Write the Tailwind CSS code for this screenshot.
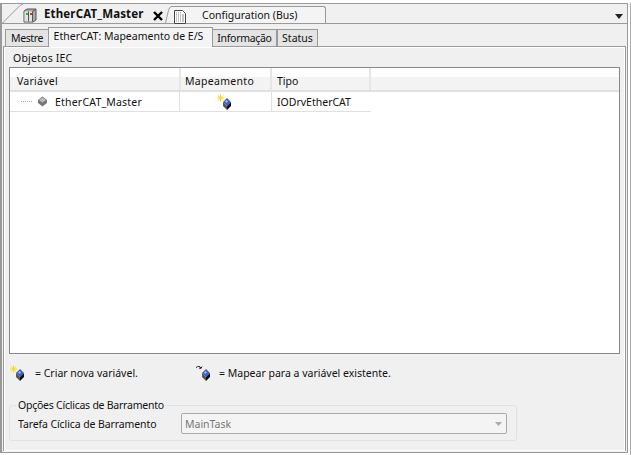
<!DOCTYPE html>
<html lang="en">
<head>
  <meta charset="UTF-8" />
  <title>EtherCAT_Master</title>
  <script src="https://cdn.jsdelivr.net/npm/@tailwindcss/browser@4"></script>
</head>
<body class="w-[631px] h-[455px] overflow-hidden bg-white text-[10.5px] leading-[14px] text-[#111] font-['Noto_Sans','Open_Sans',sans-serif]">
  <div class="w-[631px] h-[455px] pt-[3px] flex">
    <div class="w-[628px] h-[450px] border border-[#999] border-l-2 bg-[#f0f0f0] flex flex-col">

      <!-- editor tabs -->
      <div class="relative h-[20px] border-b border-[#999] flex items-end shrink-0">
        <svg class="absolute left-0 top-0" width="22" height="20" viewBox="0 0 22 20"><path d="M0 19.500L18 1.500q1-1 3-1" stroke="#999" fill="none"/></svg>
        <div class="ml-[21px] w-[142px] h-[19px] flex items-center relative">
          <svg class="mt-[3px]" width="14" height="15" viewBox="0 0 14 15">
            <path d="M1 3l3-2h9v11l-3 2H1z" fill="#aaa" stroke="#555"/>
            <path d="M1.500 3.500h8v10h-8z" fill="#e2e2e2"/>
            <path d="M5.500 3.500v10M9.500 3.500v10M9.500 3.500l3-2" stroke="#555" fill="none"/>
            <rect x="3" y="5" width="2" height="2" fill="#2b2"/>
            <rect x="7" y="5" width="2" height="2" fill="#c33"/>
          </svg>
          <span class="ml-[7px] font-bold text-[11.5px] tracking-[0.15px]">EtherCAT_Master</span>
          <svg class="absolute left-[130px] top-[7px]" width="10" height="10" viewBox="0 0 10 10"><path d="M1 1l8 8M9 1L1 9" stroke="#000" stroke-width="2.400"/></svg>
        </div>
        <svg class="-mr-[1px] shrink-0 relative z-10" width="7" height="17" viewBox="0 0 7 17"><path d="M.5 17C2 11 3 5 4.500 2q.7-1.500 2.500-1.500" stroke="#999" fill="#f4f4f4"/></svg>
        <div class="w-[155px] h-[17px] bg-[#f4f4f4] border-t border-r border-[#999] rounded-tr-[3px] flex items-center">
          <svg class="ml-[2px] mt-[2px]" width="14" height="15" viewBox="0 0 14 15">
            <path d="M1.500 1.500h8l3 3v10h-11z" fill="#fff" stroke="#444"/>
            <path d="M3 4h6M3 6h8M3 8h8M3 10h8M3 12h8" stroke="#888"/>
            <path d="M4.500 3v10M6.500 3v10M8.500 3v10" stroke="#fff"/>
          </svg>
          <span class="ml-[15px]">Configuration (Bus)</span>
        </div>
        <svg class="absolute right-[4px] top-[10px]" width="8" height="5" viewBox="0 0 8 5"><path d="M0 0h8L4 5z" fill="#222"/></svg>
      </div>

      <!-- device tabs -->
      <div class="h-[19px] mt-[3px] pl-[3px] flex items-end shrink-0 relative z-10">
        <div class="w-[44px] h-[17px] border border-b-0 border-[#999] bg-[#e4e4e4] flex items-center justify-center tracking-[-0.4px]">Mestre</div>
        <div class="w-[165px] h-[20px] border border-b-0 border-[#999] bg-[#f4f4f4] flex items-center justify-center -ml-[1px] -mb-[1px] pb-[3px] pr-[4px]">EtherCAT: Mapeamento de E/S</div>
        <div class="w-[65px] h-[17px] border border-b-0 border-[#999] bg-[#e4e4e4] flex items-center justify-center -ml-[1px] tracking-[-0.3px]">Informação</div>
        <div class="w-[41px] h-[17px] border border-b-0 border-[#999] bg-[#e4e4e4] flex items-center justify-center">Status</div>
      </div>

      <!-- page -->
      <div class="ml-[1px] mr-[1px] h-[405px] border border-[#999] border-b-0 shadow-[inset_1px_1px_0_#fff,inset_-1px_-1px_0_#fff] flex flex-col pl-[5px]">
        <div class="h-[20px] pt-[4px] pl-[4px] shrink-0 tracking-[0.2px]">Objetos IEC</div>

        <div class="w-[611px] h-[287px] border border-[#888] bg-white shrink-0 flex flex-col">
          <div class="h-[24px] flex border-b-2 border-[#e0e0e0] bg-[linear-gradient(#fff_0,#fff_40%,#f3f3f3_40%,#f3f3f3)] shrink-0">
            <div class="w-[171px] pl-[7px] pt-[6px] border-r-2 border-[#e6e6e6] tracking-[0.25px]">Variável</div>
            <div class="w-[91px] pl-[4px] pt-[6px] border-r-2 border-[#e6e6e6] tracking-[0.3px]">Mapeamento</div>
            <div class="w-[99px] pl-[5px] pt-[6px] border-r-2 border-[#e6e6e6]">Tipo</div>
          </div>
          <div class="h-[20px] w-[361px] flex border-b border-[#e0e0e0]">
            <div class="w-[170px] flex items-center border-r border-[#e0e0e0]">
              <span class="ml-[11px] w-[11px] border-t border-dotted border-[#aaa]"></span>
              <svg class="ml-[5px]" width="11" height="11" viewBox="0 0 11 11">
                <path d="M5.500 .5l4.500 3.500v3l-4.500 3.500-4.500-3.500v-3z" fill="#777"/>
                <path d="M5.500 1.500L9 4 5.500 6.500 2 4z" fill="#bbb"/>
              </svg>
              <span class="ml-[7px] tracking-[0.2px]">EtherCAT_Master</span>
            </div>
            <div class="w-[92px] flex items-center border-r border-[#e0e0e0]">
              <svg class="ml-[36px]" width="16" height="16" viewBox="0 0 16 16">
                <path d="M4.500 .5v7M1 4h7M2 1.500l5 5M7 1.500l-5 5" stroke="#eede20" fill="none"/>
                <path d="M11 4l4 4-4 4-4-4z" fill="#3a5fc8"/>
                <path d="M7 8l4 4v4l-4-4z" fill="#555"/>
                <path d="M15 8l-4 4v4l4-4z" fill="#111"/>
                <path d="M10.500 6l1.500 1.500-1.500 1.500L9 7.500z" fill="#9fbcf4"/>
              </svg>
            </div>
            <div class="flex-1 pl-[5px] flex items-center">IODrvEtherCAT</div>
          </div>
        </div>

        <div class="h-[37px] flex items-center shrink-0">
          <svg class="mt-[1px]" width="16" height="16" viewBox="0 0 16 16">
            <path d="M4.500 .5v7M1 4h7M2 1.500l5 5M7 1.500l-5 5" stroke="#eede20" fill="none"/>
            <path d="M11 4l4 4-4 4-4-4z" fill="#3a5fc8"/>
            <path d="M7 8l4 4v4l-4-4z" fill="#555"/>
            <path d="M15 8l-4 4v4l4-4z" fill="#111"/>
            <path d="M10.500 6l1.500 1.500-1.500 1.500L9 7.500z" fill="#9fbcf4"/>
          </svg>
          <span class="ml-[10px] w-[160px]">= Criar nova variável.</span>
          <svg class="mt-[1px]" width="16" height="16" viewBox="0 0 16 16">
            <path d="M1 2.500c2-1.500 4-1.500 5 .5M6 3.500l-2-.5M6 3.500l1-2" stroke="#222" fill="none"/>
            <path d="M11 4l4 4-4 4-4-4z" fill="#3a5fc8"/>
            <path d="M7 8l4 4v4l-4-4z" fill="#555"/>
            <path d="M15 8l-4 4v4l4-4z" fill="#111"/>
            <path d="M10.500 6l1.500 1.500-1.500 1.500L9 7.500z" fill="#9fbcf4"/>
          </svg>
          <span class="ml-[8px]">= Mapear para a variável existente.</span>
        </div>

        <fieldset class="w-[508px] h-[42px] mt-[8px] border border-[#dce3ea] rounded-[3px] pl-[8px] shrink-0">
          <legend class="px-[1px] ml-[-1px] leading-[13px] tracking-[-0.24px]">Opções Cíclicas de Barramento</legend>
          <div class="flex items-center mt-[1px]">
            <span class="w-[163px] tracking-[-0.1px]">Tarefa Cíclica de Barramento</span>
            <div class="w-[326px] h-[21px] border border-[#aaa] rounded-[2px] bg-[#f4f4f4] text-[#777] pl-[3px] flex items-center justify-between pr-[4px]">
              MainTask
              <svg width="7" height="4" viewBox="0 0 7 4"><path d="M0 0h7L3.500 4z" fill="#aaa"/></svg>
            </div>
          </div>
        </fieldset>
      </div>
    </div>
    <div class="ml-[2px] w-[1px] h-[452px] bg-[#aaa]"></div>
  </div>
</body>
</html>
